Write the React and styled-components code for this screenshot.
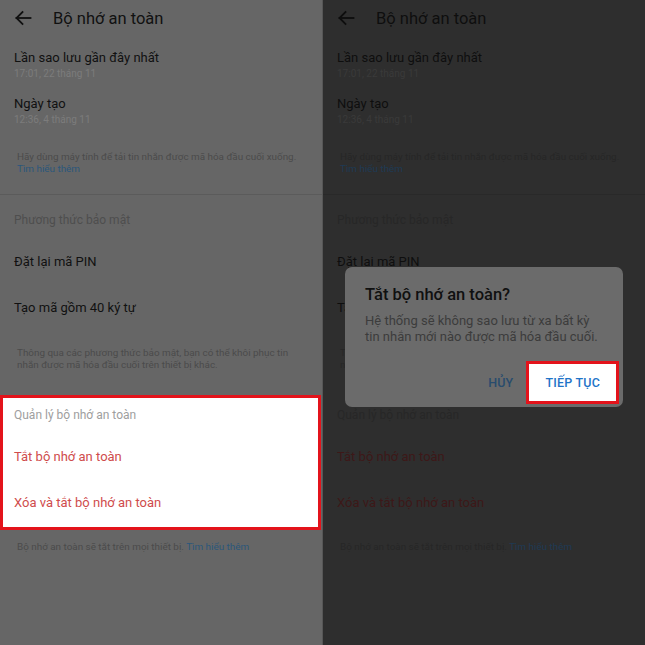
import React from "react";
import styled, { createGlobalStyle, ThemeProvider } from "styled-components";

const GlobalStyle = createGlobalStyle`
    * { box-sizing: border-box; }
    body {
      margin: 0;
      background: #2e2e2e;
      font-family: Roboto, "Noto Sans", "Liberation Sans", sans-serif;
    }
`;

const dimLight = {
    bg: "#666666",
    text: "#111111",
    date: "#7c7c7c",
    note: "#4b4b4b",
    link: "#2b577b",
    head: "#4e4e4e",
    red: "#3a1a1a",
    divider: "#5b5b5b",
};

const dimDark = {
    bg: "#2e2e2e",
    text: "#0e0e0e",
    date: "#3a3a3a",
    note: "#262626",
    link: "#1e3a54",
    head: "#272727",
    red: "#3d1818",
    divider: "#292929",
};

const highlight = {
    bg: "#ffffff",
    text: "#111111",
    head: "#9e9e9e",
    red: "#cf4c4c",
};

const Page = styled.div`
    display: grid;
    grid-template-columns: 322px 323px;
    width: 645px;
    height: 645px;
    overflow: hidden;
`;

const Screen = styled.div`
    position: relative;
    height: 645px;
    background: ${p => p.theme.bg};
    border-left: ${p => p.$split ? "1px solid #575757" : "none"};
`;

const TopBar = styled.header`
    display: flex;
    align-items: center;
    height: 36px;
    padding-left: 14px;
    gap: 21px;
    color: ${p => p.theme.text};
`;

const Title = styled.h1`
    margin: 0;
    font-size: 16.5px;
    font-weight: 400;
    color: ${p => p.theme.text};
`;

const Item = styled.div`
    padding: 7px 14px;
`;

const ItemLabel = styled.div`
    font-size: 13px;
    line-height: 18px;
    color: ${p => p.theme.text};
`;

const Row = styled.div`
    display: flex;
    align-items: center;
    height: 46px;
    padding: 0 14px;
    font-size: 13px;
    color: ${p => p.$danger ? p.theme.red : p.theme.text};
`;

const ItemDate = styled.div`
    font-size: 10px;
    line-height: 14px;
    color: ${p => p.theme.date};
`;

const Note = styled.p`
    margin: 0;
    padding: ${p => p.$pad || "17px 17px 19px"};
    font-size: 9.9px;
    line-height: 12px;
    color: ${p => p.theme.note};
    white-space: nowrap;
`;

const NoteLink = styled.span`
    color: ${p => p.theme.link};
`;

const Divider = styled.hr`
    margin: 0;
    border: none;
    height: 1px;
    background: ${p => p.theme.divider};
`;

const SectionHead = styled.div`
    padding: ${p => p.$pad || "17px 14px 10px"};
    font-size: 12px;
    line-height: 16px;
    color: ${p => p.theme.head};
`;

const Section = styled.section`
    width: 321px;
    background: ${p => p.theme.bg};
    border: 3px solid ${p => p.$marked ? "#e3131b" : "transparent"};
    border-left-width: ${p => p.$marked ? 3 : 0}px;
    padding-left: ${p => p.$marked ? 0 : 3}px;
    margin-top: 24px;
    padding-bottom: 2px;
    ${Row}, ${SectionHead} {
      padding-left: 11px;
    }
`;

const Dialog = styled.div`
    position: absolute;
    left: 22px;
    top: 267px;
    width: 278px;
    padding: 17px 4px 3px 20px;
    border-radius: 7px;
    background: #6b6b6b;
`;

const DialogTitle = styled.div`
    font-size: 16.5px;
    line-height: 22px;
    font-weight: 500;
    color: #101010;
`;

const DialogBody = styled.div`
    margin-top: 7px;
    font-size: 13px;
    line-height: 16px;
    color: #3c3c3c;
`;

const Actions = styled.div`
    display: flex;
    justify-content: flex-end;
    align-items: center;
    margin-top: 16px;
`;

const ActionButton = styled.button`
    display: flex;
    align-items: center;
    justify-content: center;
    height: 43px;
    padding: 0 ${p => p.$marked ? 16 : 10}px;
    border: 3px solid ${p => p.$marked ? "#e3131b" : "transparent"};
    background: ${p => p.$marked ? "#ffffff" : "transparent"};
    font-family: inherit;
    font-size: 12.5px;
    font-weight: 500;
    letter-spacing: 0.2px;
    color: ${p => p.$marked ? "#1f74c8" : "#294c6d"};
`;

const BackArrow = () => (
    <svg width="18" height="16" viewBox="0 0 18 16" fill="none" stroke="currentColor" strokeWidth="1.8" strokeLinecap="square">
        <path d="M2.5 8H16.5" />
        <path d="M8.5 2L2.5 8L8.5 14" />
    </svg>
);

const ManageSection = ({ marked }) => (
    <Section $marked={marked}>
        <SectionHead $pad="9px 14px 10px">Quản lý bộ nhớ an toàn</SectionHead>
        <Row $danger>Tắt bộ nhớ an toàn</Row>
        <Row $danger>Xóa và tắt bộ nhớ an toàn</Row>
    </Section>
);

const SettingsScreen = ({ marked, split, children }) => (
    <Screen $split={split}>
        <TopBar>
            <BackArrow />
            <Title>Bộ nhớ an toàn</Title>
        </TopBar>
        <Item style={{ marginTop: 6 }}>
            <ItemLabel>Lần sao lưu gần đây nhất</ItemLabel>
            <ItemDate>17:01, 22 tháng 11</ItemDate>
        </Item>
        <Item>
            <ItemLabel>Ngày tạo</ItemLabel>
            <ItemDate>12:36, 4 tháng 11</ItemDate>
        </Item>
        <Note>
            Hãy dùng máy tính để tải tin nhắn được mã hóa đầu cuối xuống.<br />
            <NoteLink>Tìm hiểu thêm</NoteLink>
        </Note>
        <Divider />
        <SectionHead>Phương thức bảo mật</SectionHead>
        <Row>Đặt lại mã PIN</Row>
        <Row>Tạo mã gồm 40 ký tự</Row>
        <Note $pad="17px 17px 0">
            Thông qua các phương thức bảo mật, bạn có thể khôi phục tin<br />
            nhắn được mã hóa đầu cuối trên thiết bị khác.
        </Note>
        {marked ? (
            <ThemeProvider theme={highlight}>
                <ManageSection marked />
            </ThemeProvider>
        ) : (
            <ManageSection />
        )}
        <Note $pad="11px 17px 0">
            Bộ nhớ an toàn sẽ tắt trên mọi thiết bị. <NoteLink>Tìm hiểu thêm</NoteLink>
        </Note>
        {children}
    </Screen>
);

const App = () => (
    <>
        <GlobalStyle />
        <Page>
            <ThemeProvider theme={dimLight}>
                <SettingsScreen marked />
            </ThemeProvider>
            <ThemeProvider theme={dimDark}>
                <SettingsScreen split>
                    <Dialog>
                        <DialogTitle>Tắt bộ nhớ an toàn?</DialogTitle>
                        <DialogBody>
                            Hệ thống sẽ không sao lưu từ xa bất kỳ<br />
                            tin nhắn mới nào được mã hóa đầu cuối.
                        </DialogBody>
                        <Actions>
                            <ActionButton>HỦY</ActionButton>
                            <ActionButton $marked>TIẾP TỤC</ActionButton>
                        </Actions>
                    </Dialog>
                </SettingsScreen>
            </ThemeProvider>
        </Page>
    </>
);

export default App;
